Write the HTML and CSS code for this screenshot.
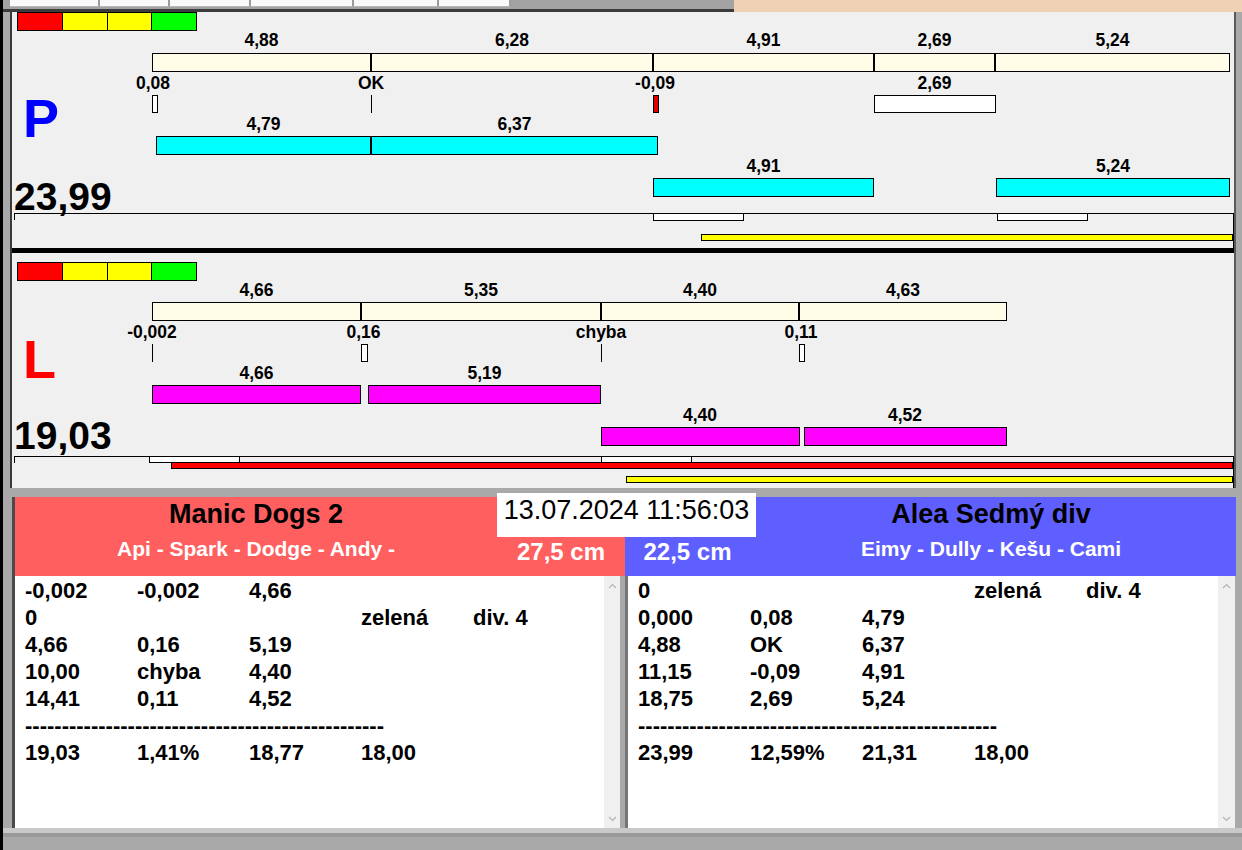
FILE: index.html
```html
<!DOCTYPE html>
<html>
<head>
<meta charset="utf-8">
<link rel="stylesheet" href="styles.css">
</head>
<body>
<div class="window">
  <div class="tabbar">
    <div class="tabs">
      <div class="tab t1"></div><div class="tab t2"></div><div class="tab t3"></div>
      <div class="tab t4"></div><div class="tab t5"></div><div class="tab t6"></div>
    </div>
    <div class="peach"></div>
  </div>
  <div class="body">
    <div class="charts">
      <div class="panel p">
        <div class="strip" style="left:5px;top:0"><i class="r"></i><i class="y"></i><i class="y"></i><i class="g"></i></div>
        <div class="bar seg" style="left:140px;top:41px;width:219px"></div>
        <div class="bar seg" style="left:359px;top:41px;width:282px"></div>
        <div class="bar seg" style="left:641px;top:41px;width:221px"></div>
        <div class="bar seg" style="left:862px;top:41px;width:121px"></div>
        <div class="bar seg" style="left:983px;top:41px;width:235px"></div>
        <div class="lb" style="left:249.5px;top:19px">4,88</div>
        <div class="lb" style="left:500px;top:19px">6,28</div>
        <div class="lb" style="left:751.5px;top:19px">4,91</div>
        <div class="lb" style="left:922.5px;top:19px">2,69</div>
        <div class="lb" style="left:1100.5px;top:19px">5,24</div>
        <div class="lb" style="left:141px;top:62px">0,08</div>
        <div class="lb" style="left:359px;top:62px">OK</div>
        <div class="lb" style="left:643px;top:62px">-0,09</div>
        <div class="lb" style="left:922.5px;top:62px">2,69</div>
        <div class="mk wh" style="left:140px;top:83px;width:6px"></div>
        <div class="mk vl" style="left:359px;top:83px"></div>
        <div class="mk rd" style="left:641px;top:83px;width:6px"></div>
        <div class="mk wh" style="left:862px;top:83px;width:122px"></div>
        <div class="side blue-t" style="left:11px;top:79px">P</div>
        <div class="bar cy" style="left:144px;top:124px;width:215px"></div>
        <div class="bar cy" style="left:359px;top:124px;width:287px"></div>
        <div class="lb" style="left:251.5px;top:103px">4,79</div>
        <div class="lb" style="left:502.5px;top:103px">6,37</div>
        <div class="bar cy" style="left:641px;top:166px;width:221px"></div>
        <div class="bar cy" style="left:984px;top:166px;width:234px"></div>
        <div class="lb" style="left:751.5px;top:145px">4,91</div>
        <div class="lb" style="left:1101px;top:145px">5,24</div>
        <div class="big" style="left:2px;top:165px">23,99</div>
        <div class="hl" style="left:2px;top:201px;width:1220px"></div>
        <div class="vl" style="left:2px;top:201px;height:7px"></div>
        <div class="vl" style="left:1221px;top:201px;height:35px"></div>
        <div class="tl wh" style="left:641px;top:201px;width:91px"></div>
        <div class="tl wh" style="left:985px;top:201px;width:91px"></div>
        <div class="tl yl" style="left:689px;top:222px;width:532px"></div>
      </div>
      <div class="sep"></div>
      <div class="panel l">
        <div class="strip" style="left:5px;top:9px"><i class="r"></i><i class="y"></i><i class="y"></i><i class="g"></i></div>
        <div class="bar seg" style="left:140px;top:49px;width:209px"></div>
        <div class="bar seg" style="left:349px;top:49px;width:240px"></div>
        <div class="bar seg" style="left:589px;top:49px;width:198px"></div>
        <div class="bar seg" style="left:787px;top:49px;width:208px"></div>
        <div class="lb" style="left:244.5px;top:28px">4,66</div>
        <div class="lb" style="left:469px;top:28px">5,35</div>
        <div class="lb" style="left:688px;top:28px">4,40</div>
        <div class="lb" style="left:891px;top:28px">4,63</div>
        <div class="lb" style="left:140px;top:70px">-0,002</div>
        <div class="lb" style="left:351.5px;top:70px">0,16</div>
        <div class="lb" style="left:589px;top:70px">chyba</div>
        <div class="lb" style="left:789px;top:70px">0,11</div>
        <div class="mk vl" style="left:140px;top:91px"></div>
        <div class="mk wh" style="left:349px;top:91px;width:7px"></div>
        <div class="mk vl" style="left:589px;top:91px"></div>
        <div class="mk wh" style="left:787px;top:91px;width:6px"></div>
        <div class="side red-t" style="left:11px;top:79px">L</div>
        <div class="bar mg" style="left:140px;top:132px;width:209px"></div>
        <div class="bar mg" style="left:356px;top:132px;width:233px"></div>
        <div class="lb" style="left:244.5px;top:111px">4,66</div>
        <div class="lb" style="left:472.5px;top:111px">5,19</div>
        <div class="bar mg" style="left:589px;top:174px;width:199px"></div>
        <div class="bar mg" style="left:792px;top:174px;width:203px"></div>
        <div class="lb" style="left:688px;top:153px">4,40</div>
        <div class="lb" style="left:893px;top:153px">4,52</div>
        <div class="big" style="left:2px;top:163px">19,03</div>
        <div class="hl" style="left:2px;top:203px;width:1220px"></div>
        <div class="vl" style="left:2px;top:203px;height:7px"></div>
        <div class="vl" style="left:1221px;top:203px;height:32px"></div>
        <div class="tl wh" style="left:137px;top:203px;width:91px;height:7px"></div>
        <div class="tl wh" style="left:589px;top:203px;width:91px;height:7px"></div>
        <div class="tl rb" style="left:159px;top:209px;width:1062px"></div>
        <div class="tl yl" style="left:614px;top:223px;width:607px"></div>
      </div>
    </div>
    <div class="band"></div>
    <div class="teams">
      <div class="date">13.07.2024 11:56:03</div>
      <div class="team red">
        <div class="head">
          <div class="title">Manic Dogs 2</div>
          <div></div>
          <div class="names">Api - Spark - Dodge - Andy -</div>
          <div class="cm">27,5 cm</div>
        </div>
        <div class="list">
          <div class="rows">
            <div class="row"><span>-0,002</span><span>-0,002</span><span>4,66</span></div>
            <div class="row"><span>0</span><span></span><span></span><span class="w">zelená</span><span class="w">div. 4</span></div>
            <div class="row"><span>4,66</span><span>0,16</span><span>5,19</span></div>
            <div class="row"><span>10,00</span><span class="w">chyba</span><span>4,40</span></div>
            <div class="row"><span>14,41</span><span>0,11</span><span>4,52</span></div>
            <div class="row dash">-------------------------------------------------</div>
            <div class="row"><span>19,03</span><span>1,41%</span><span>18,77</span><span>18,00</span></div>
          </div>
          <div class="scroll">
            <svg width="9" height="6" viewBox="0 0 9 6"><path d="M1 5 L4.5 1.5 L8 5" fill="none" stroke="#b4b4b4" stroke-width="1.2"/></svg>
            <svg width="9" height="6" viewBox="0 0 9 6"><path d="M1 1 L4.5 4.5 L8 1" fill="none" stroke="#b4b4b4" stroke-width="1.2"/></svg>
          </div>
        </div>
      </div>
      <div class="team blue">
        <div class="head">
          <div></div>
          <div class="title">Alea Sedmý div</div>
          <div class="cm">22,5 cm</div>
          <div class="names">Eimy - Dully - Kešu - Cami</div>
        </div>
        <div class="list">
          <div class="rows">
            <div class="row"><span>0</span><span></span><span></span><span class="w">zelená</span><span class="w">div. 4</span></div>
            <div class="row"><span>0,000</span><span>0,08</span><span>4,79</span></div>
            <div class="row"><span>4,88</span><span>OK</span><span>6,37</span></div>
            <div class="row"><span>11,15</span><span>-0,09</span><span>4,91</span></div>
            <div class="row"><span>18,75</span><span>2,69</span><span>5,24</span></div>
            <div class="row dash">-------------------------------------------------</div>
            <div class="row"><span>23,99</span><span>12,59%</span><span>21,31</span><span>18,00</span></div>
          </div>
          <div class="scroll">
            <svg width="9" height="6" viewBox="0 0 9 6"><path d="M1 5 L4.5 1.5 L8 5" fill="none" stroke="#b4b4b4" stroke-width="1.2"/></svg>
            <svg width="9" height="6" viewBox="0 0 9 6"><path d="M1 1 L4.5 4.5 L8 1" fill="none" stroke="#b4b4b4" stroke-width="1.2"/></svg>
          </div>
        </div>
      </div>
    </div>
  </div>
  <div class="status"></div>
</div>
</body>
</html>
```

FILE: styles.css
```css
* { box-sizing: border-box; }
body { margin: 0; font-family: "Liberation Sans", Arial, sans-serif; color: #000; }

.window {
  width: 1242px; height: 850px; overflow: hidden;
  background: #a9a9a9; border-left: 3px solid #000;
  display: flex; flex-direction: column;
}

.tabbar { height: 12px; flex: none; display: flex; }
.tabs {
  width: 731px; background: #a3a3a3; border-bottom: 3px solid #3c3c3c;
  display: flex; padding-left: 7px;
}
.tab { height: 7px; background: #fafafa; border-right: 2px solid #9c9c9c; border-bottom: 1px solid #b8b8b8; }
.t1 { width: 90px; } .t2 { width: 70px; } .t3 { width: 81px; }
.t4 { width: 103px; } .t5 { width: 85px; } .t6 { width: 72px; }
.peach { flex: 1; background: #efd2b5; }

.body { flex: 1; padding-left: 7px; display: flex; flex-direction: column; }

.charts {
  margin-right: 6px; border-left: 2px solid #3a3a3a; border-right: 2px solid #5a5a5a;
  background: #f0f0f0;
}
.panel { position: relative; height: 236px; background: #f0f0f0; overflow: hidden; }
.panel.l { height: 235px; }
.sep { height: 5px; background: #000; }

.strip { position: absolute; width: 180px; height: 19px; display: flex; border: 1px solid #000; }
.strip i { flex: 1; border-left: 1px solid #000; }
.strip i:first-child { border-left: 0; }
.strip .r { background: #ff0000; }
.strip .y { background: #ffff00; }
.strip .g { background: #00ff00; }

.bar { position: absolute; height: 19px; border: 1px solid #000; }
.seg { background: #fffde8; }
.cy { background: #00ffff; }
.mg { background: #ff00ff; }

.mk { position: absolute; height: 18px; }
.wh { position: absolute; background: #fff; border: 1px solid #000; }
.rd { position: absolute; background: #dd0000; border: 1px solid #000; }
.vl { position: absolute; width: 1px; background: #000; }
.hl { position: absolute; height: 1px; background: #000; }
.tl { position: absolute; height: 8px; }
.yl { background: #ffff00; border: 1px solid #000; height: 7px; }
.rb { background: #ff0000; border: 1px solid #000; height: 7px; }

.lb {
  position: absolute; transform: translateX(-50%);
  font-size: 17.5px; font-weight: bold; line-height: 18px; white-space: nowrap;
}
.big { position: absolute; font-size: 39px; font-weight: bold; line-height: 39px; }
.side { position: absolute; font-size: 54px; font-weight: bold; line-height: 54px; }
.blue-t { color: #0000ff; }
.red-t { color: #ff0000; }

.band { height: 9px; flex: none; }

.teams {
  position: relative; height: 331px; flex: none;
  margin-left: 2px; margin-right: 6px; border-left: 3px solid #4a4a4a;
  display: grid; grid-template-columns: 610px 611px;
}
.date {
  position: absolute; left: 482px; top: -4px; width: 259px; height: 44px; z-index: 2;
  background: #fff; font-size: 27px; line-height: 34px; text-align: center; white-space: nowrap;
}

.head { display: grid; height: 79px; grid-template-rows: 40px 39px; }
.red .head { background: #ff5f5f; grid-template-columns: 482px 128px; }
.blue .head { background: #5f5fff; grid-template-columns: 131px 480px; }
.title { font-size: 27px; font-weight: bold; line-height: 35px; text-align: center; white-space: nowrap; }
.names { color: #fff; font-size: 21px; font-weight: bold; line-height: 24px; padding-top: 0; text-align: center; white-space: nowrap; }
.cm { color: #fff; font-size: 24px; font-weight: bold; line-height: 28px; padding-top: 1px; text-align: center; white-space: nowrap; }
.blue .title, .blue .names { padding-right: 10px; }
.blue .cm { padding-right: 6px; }

.list { height: 252px; display: flex; background: #fff; }
.red .list { margin-right: 5px; }
.blue .list { border-left: 3px solid #767676; margin-right: 1px; }
.rows { flex: 1; padding: 1px 0 0 10px; font-size: 22px; font-weight: bold; line-height: 27px; }
.row { display: grid; grid-template-columns: repeat(5, 112px); height: 27px; white-space: nowrap; }
.row.dash { display: block; }
.scroll {
  width: 16px; background: #f0f0f0;
  display: flex; flex-direction: column; justify-content: space-between; align-items: center;
  padding: 7px 0 6px;
}
.blue .scroll { width: 17px; }

.status { height: 22px; flex: none; background: #a9a9a9; border-top: 5px solid #c9c9c9; box-shadow: inset 0 4px 0 #9a9a9a; }
```
